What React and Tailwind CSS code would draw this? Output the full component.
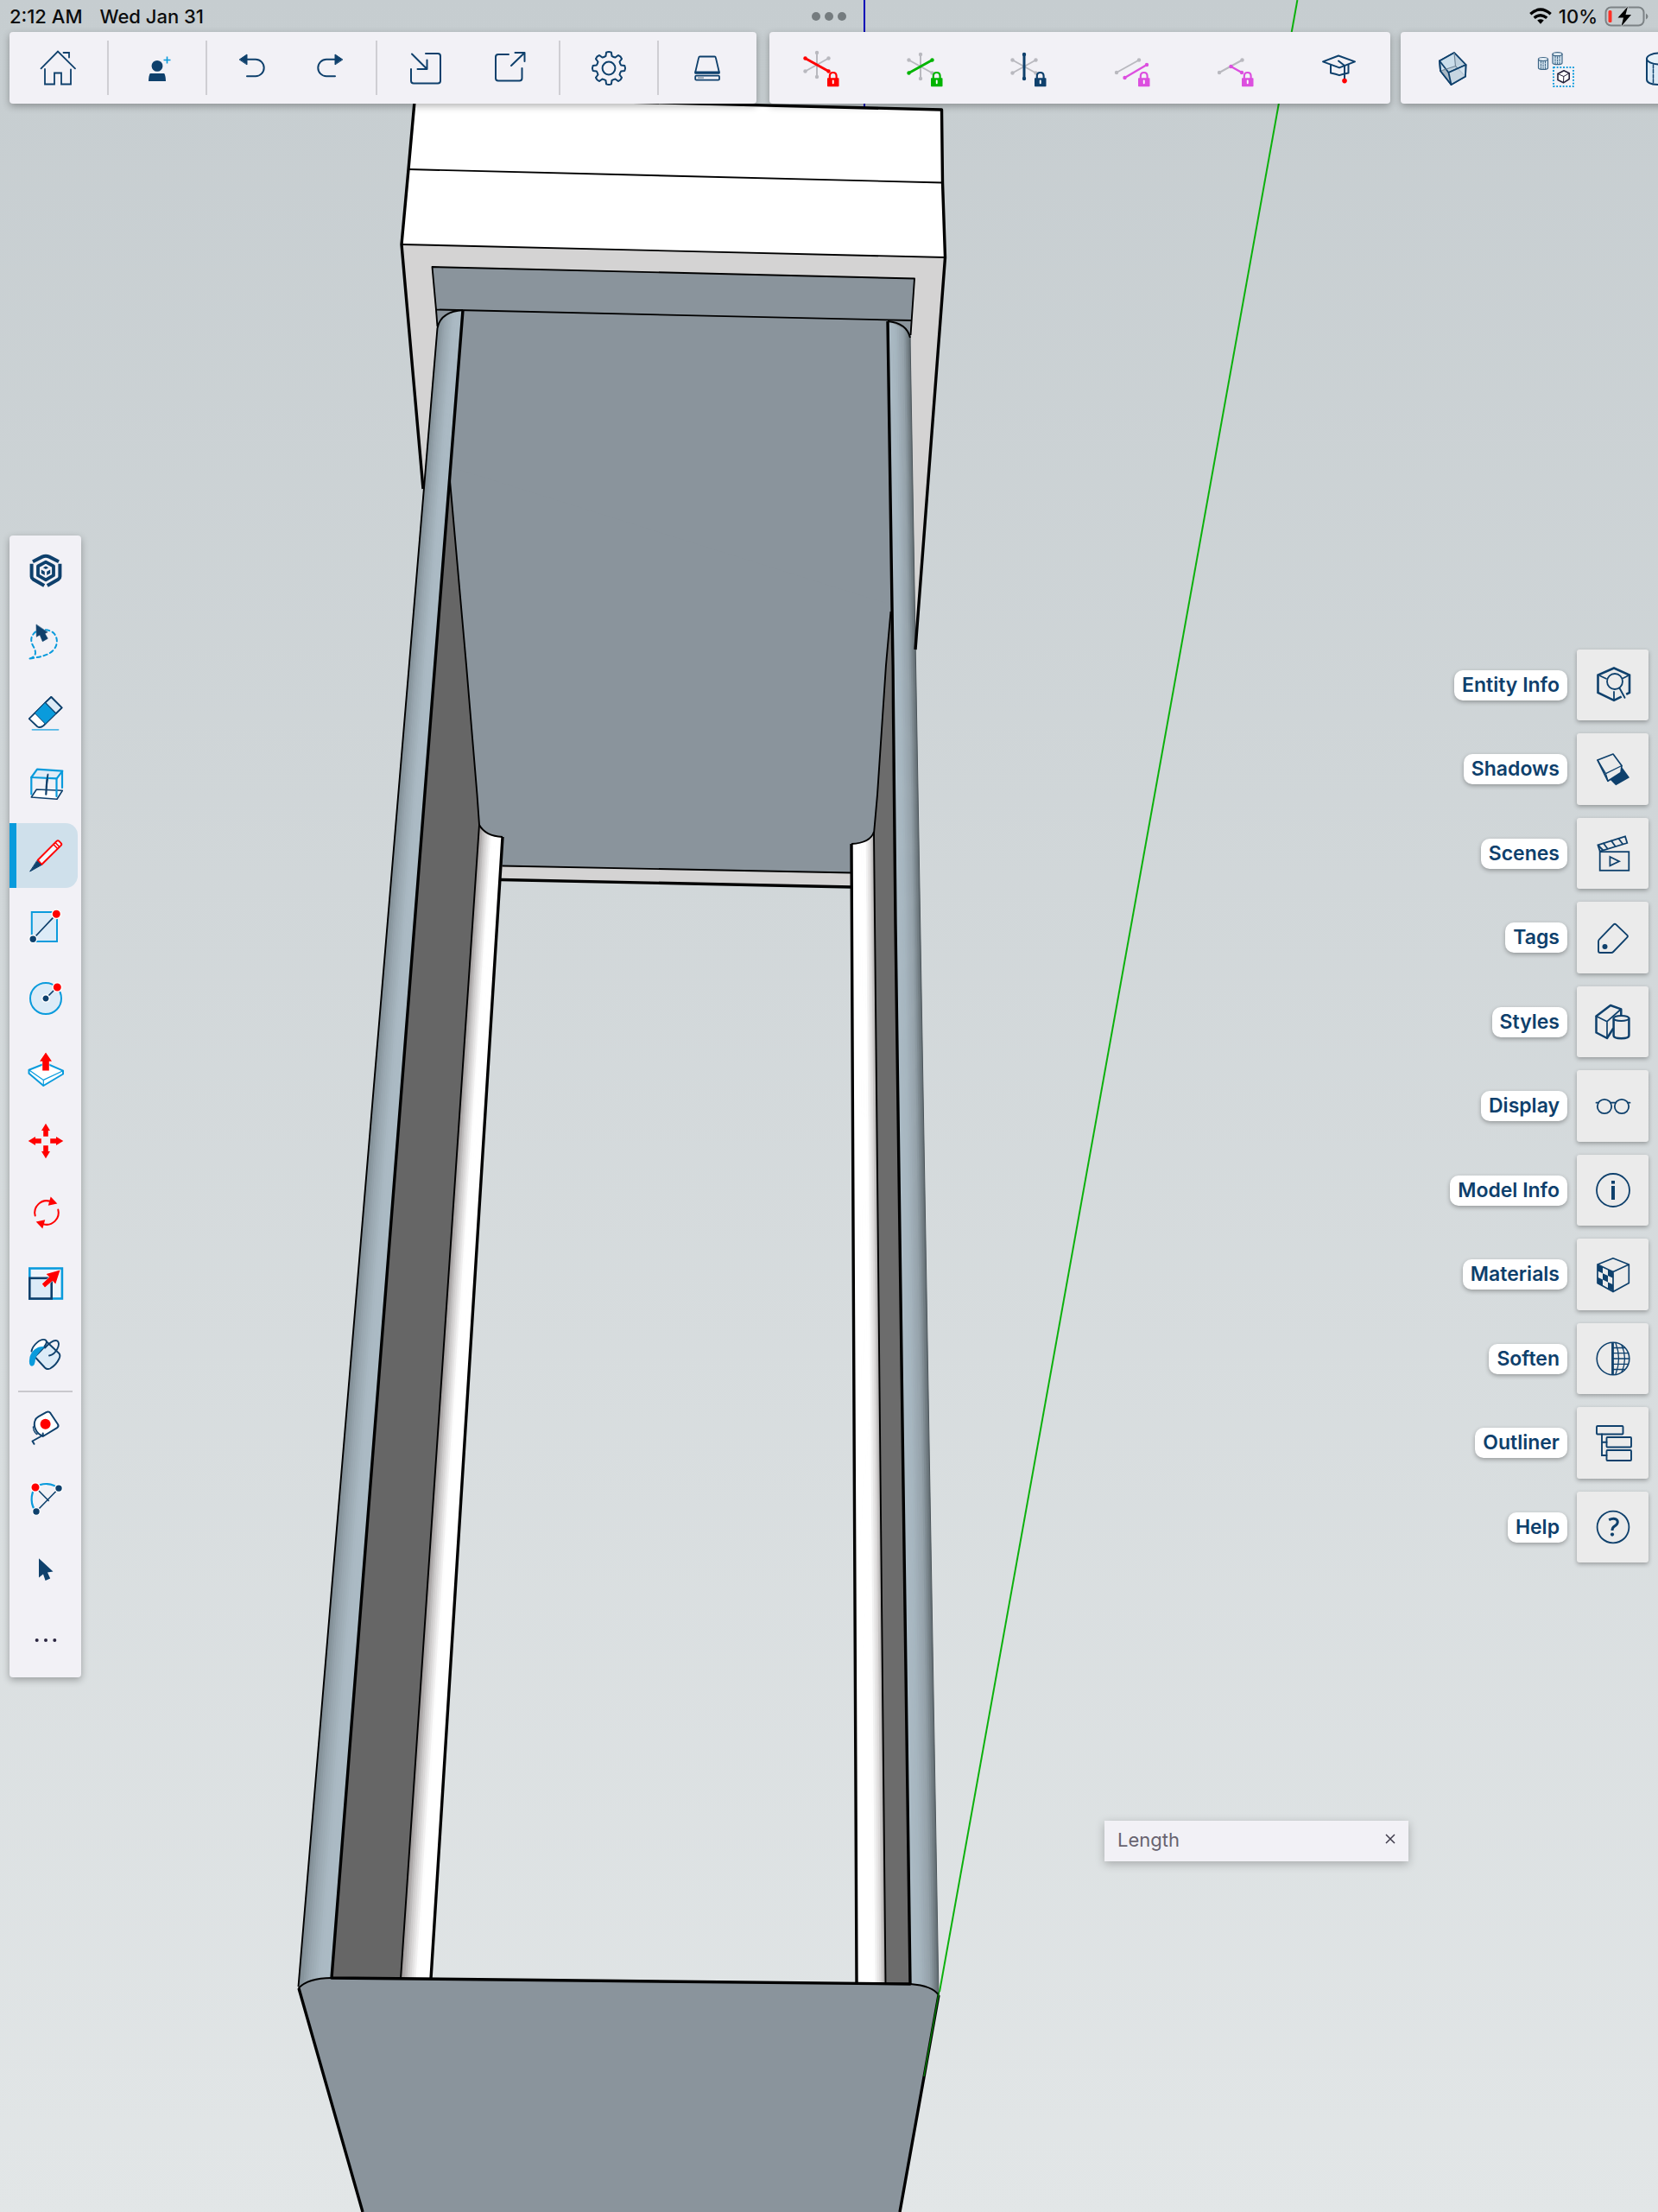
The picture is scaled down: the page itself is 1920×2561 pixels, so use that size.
import React from "react";

const NAVY = "#0e406c";
const SKY = "#0a9bdc";
const RED = "#ff0000";
const PALE = "#dcebf7";

function Icon({ children, sw = 2, fill = "none", stroke = NAVY }) {
  return (
    <svg
      viewBox="-24 -24 48 48"
      className="block h-12 w-12 shrink-0"
      fill={fill}
      stroke={stroke}
      strokeWidth={sw}
      strokeLinejoin="round"
      strokeLinecap="round"
      aria-hidden="true"
    >
      {children}
    </svg>
  );
}

/* ---------- top bar icons ---------- */

const Home = () => (
  <Icon sw={1.8}>
    <path d="M-20.5 .3 -1 -19.5 19 .3M5.5 -18H12V-12.5M-16 1V18.5H-5V5.5H3V18.5H14V1.5" strokeLinejoin="miter" />
  </Icon>
);

const AddPerson = () => (
  <Icon fill={NAVY} stroke="none">
    <circle cx="0" cy="-2.6" r="6.4" />
    <path d="M-8.2 6H8.2Q9.8 8.5 10 15H-10Q-9.8 8.5 -8.2 6Z" />
    <path d="M11.5 -13.5V-5.5M7.5 -9.5H15.5" stroke={SKY} strokeWidth="1.6" strokeLinecap="butt" />
  </Icon>
);

const UndoArrow = () => (
  <Icon>
    <path d="M-7 -10.2H3A9.7 9.7 0 0 1 3 9.2H-7" />
    <path d="M-15.500 -10.2 -7 -16V-4.500Z" fill={NAVY} strokeWidth="1" />
  </Icon>
);

const RedoArrow = () => (
  <Icon>
    <path d="M5 -10.2H-5A9.7 9.7 0 0 0 -5 9.2H5" />
    <path d="M13.500 -10.2 5 -16V-4.500Z" fill={NAVY} strokeWidth="1" />
  </Icon>
);

const ImportIcon = () => (
  <Icon>
    <path d="M0 -17H14Q17 -17 17 -14V14.5Q17 17.500 14 17.500H-14Q-17 17.500 -17 14.500V1" />
    <path d="M-16 -16.5 1 .5M1.5 -9.5V1H-9.5" />
  </Icon>
);

const ExportIcon = () => (
  <Icon>
    <path d="M-2 -16H-14Q-17 -16 -17 -13V11.5Q-17 14.5 -14 14.5H10.5Q13.5 14.5 13.5 11.5V0" />
    <path d="M1 -3 16 -17.5M5.5 -18H16.5V-8" />
  </Icon>
);

const polar = (r, deg) => {
  const a = (deg * Math.PI) / 180;
  return `${(r * Math.cos(a)).toFixed(2)} ${(r * Math.sin(a)).toFixed(2)}`;
};

const gearPath =
  Array.from({ length: 8 }, (_, k) => {
    const t = k * 45;
    return `${k === 0 ? "M" : "L"}${polar(14.6, t - 14)}L${polar(18.6, t - 9)}Q${polar(19.8, t)} ${polar(18.6, t + 9)}L${polar(14.6, t + 14)}Q${polar(14, t + 22.5)} ${polar(14.6, t + 31)}`;
  }).join("") + "Z";

const Gear = () => (
  <Icon>
    <path d={gearPath} />
    <circle r="7.4" />
  </Icon>
);

const Drive = () => (
  <Icon sw={1.8}>
    <path d="M-8.5 -13.5H8.5Q9.6 -13.5 9.8 -12.5L13.8 4.5H-13.8L-9.8 -12.5Q-9.6 -13.5 -8.5 -13.5Z" />
    <path d="M-13.8 4.5V5.8H13.8V4.5" />
    <rect x="-13.8" y="8.6" width="27.8" height="5" rx="1.2" />
    <rect x="-11" y="10.2" width="7" height="1.8" fill="#9aa7b5" stroke="none" />
  </Icon>
);

const Lock = ({ color }) => (
  <g stroke="none">
    <rect x="7" y="11.2" width="13.5" height="10" rx=".8" fill={color} />
    <path d="M9.8 12V9.2Q9.8 5 13.7 5T17.6 9.200V12" fill="none" stroke={color} strokeWidth="2.200" />
    <rect x="12.8" y="13.6" width="1.9" height="4.6" rx=".9" fill="#fff" />
  </g>
);

const Rod = ({ x1, y1, x2, y2, color, w = 2 }) => (
  <g stroke={color} fill={color}>
    <line x1={x1} y1={y1} x2={x2} y2={y2} strokeWidth={w} />
    <circle cx={x1} cy={y1} r="2.2" stroke="none" />
    <circle cx={x2} cy={y2} r="2.2" stroke="none" />
  </g>
);

const GREY = "#b9b9bf";

function Axis({ axis, color }) {
  const dy = axis === "red" ? -4 : -2;
  const rods = {
    red: [-18.5, dy - 7.5, 8.5, dy + 7.5],
    green: [-18.5, dy + 7.5, 8.5, dy - 7.5],
    blue: [-5, dy - 14, -5, dy + 14],
  };
  const order = ["blue", "green", "red"].filter((k) => k !== axis);
  return (
    <Icon>
      {order.map((k) => (
        <Rod key={k} x1={rods[k][0]} y1={rods[k][1]} x2={rods[k][2]} y2={rods[k][3]} color={GREY} />
      ))}
      <Rod x1={rods[axis][0]} y1={rods[axis][1]} x2={rods[axis][2]} y2={rods[axis][3]} color={color} w={3} />
      <Lock color={color} />
    </Icon>
  );
}

const PINK = "#dc4fdf";

const Parallel = () => (
  <Icon>
    <Rod x1={-18} y1={5} x2={8} y2={-9.5} color={GREY} />
    <Rod x1={-8.5} y1={11} x2={17} y2={-4} color={PINK} w={2.4} />
    <Lock color={PINK} />
  </Icon>
);

const Perpendicular = () => (
  <Icon>
    <Rod x1={-19} y1={5} x2={7.5} y2={-9.5} color={GREY} />
    <Rod x1={-5.5} y1={-2} x2={7} y2={5} color={PINK} w={2.4} />
    <Lock color={PINK} />
  </Icon>
);

const Cap = () => (
  <Icon>
    <path d="M-10 -4V5.5Q-4 6.5 0 8.2Q4 6.5 10.5 5.5V-4" />
    <path d="M-19 -7.6 -1 -14.5 18 -7.6 0 -.6Z" fill="#f2f1f6" />
    <path d="M-1 -8.5 6 -3V12" />
    <circle cx="6" cy="14.6" r="2.8" fill={RED} stroke="none" />
  </Icon>
);

const GlassBox = () => (
  <Icon sw={1.8}>
    <path d="M2 -18-15 -8.5-14 3-1.5 19 15 9.5 15.5 -4Z" fill="#d3e3ef" />
    <path d="M2 -18 3.5 -2.5 15.5 -4ZM-14 3 3.5 -2.5 15 9.5-1.5 19Z" fill="#aab8c4" stroke="none" />
    <path d="M-15 -8.5 2 -18 15.5 -4-4.5 5Z" fill="#c7dbea" fillOpacity=".7" />
    <path d="M2 -18 3.5 -2.5M3.5 -2.5-13.5 3M3.5 -2.5 15 9.5" stroke="#6f8496" strokeWidth="1.2" />
    <path d="M-4.5 5-1.5 19 15 9.5 15.5 -4Z" fill="#d3e3ef" fillOpacity=".7" />
    <path d="M-15 -8.5-14 3-1.5 19" />
  </Icon>
);

const MiniCyl = ({ x, y }) => (
  <g transform={`translate(${x} ${y})`} stroke="#3f6686" strokeWidth="1.2">
    <path d="M-5.5 -5V5Q-5.5 7 0 7T5.5 5V-5" fill="#d3e3ef" />
    <ellipse cy="-5" rx="5.5" ry="2" fill="#e8f1f8" />
    <path d="M-2.5 -2.5V6M0 -2V6.5M2.5 -2.5V6" strokeDasharray="2 1.4" strokeWidth="1" />
  </g>
);

const Components = () => (
  <Icon>
    <MiniCyl x={-15} y={-5.5} />
    <MiniCyl x={1.5} y={-11.3} />
    <rect x="-3" y="-1" width="23" height="22" stroke={SKY} strokeWidth="2" strokeDasharray="1.8 1.9" strokeLinecap="butt" />
    <g stroke="#26233a" strokeWidth="1.6">
      <path d="M9 2.8 15.2 5.8V12.5L8.5 16.8 2 13.5V6.5Z" fill="#fff" />
      <path d="M2 6.5 8.8 9.5 15.2 5.8M8.8 9.5 8.5 16.8" strokeWidth="1" />
    </g>
  </Icon>
);

const Cylinder = () => (
  <Icon>
    <path d="M-15 -11V13Q-15 19 0 19T15 13V-11" fill={PALE} />
    <ellipse cy="-11" rx="15" ry="6.5" fill="#e6f1f9" />
    <path d="M-7.5 -4V17" strokeDasharray="4 1.6" strokeWidth="1.5" />
  </Icon>
);

/* ---------- left tool icons ---------- */

const Logo = () => (
  <Icon sw={4}>
    <g strokeLinecap="butt">
      <path d="M-15 -10.8-4 -16.4Q0 -18.3 4 -16.4L15 -10.8" />
      <path d="M-16.4 -8.2V6.5Q-16.4 8.6 -14.5 9.7L-1.8 17M16.4 -8.2V6.5Q16.4 8.6 14.5 9.7L1.8 17" />
      <path d="M0 -10.4 9 -5.5V5.2L0 10.4-9 5.2V-5.5Z" strokeWidth="3.8" />
    </g>
    <path d="M0 -5.6 3.2 -3.8 0 -2-3.2 -3.8ZM-5.2 -1.4-1.2 .8V5L-5.2 2.8ZM5.2 -1.4 1.2 .8V5L5.2 2.8Z" fill={NAVY} stroke="none" />
  </Icon>
);

const Lasso = () => (
  <Icon>
    <path d="M-18.5 19.5C-11 17.5 -11 12 -13.5 7C-18.5 -1 -17.5 -6 -12.5 -11C-6 -15 6 -15 10.5 -8.5C14 -3 14 4.5 8 10.5C1 17 -8 17.5 -18.5 19.5" stroke={SKY} strokeDasharray="4.5 3.6" />
    <path d="M-11 -19.7-10.7 -5.7-6.9 -8-3.7 -.3 2.3 -3.7-1 -9.5 1.8 -10.9Z" fill={NAVY} stroke={NAVY} strokeWidth=".6" />
  </Icon>
);

const Eraser = () => (
  <Icon sw={1.8}>
    <path d="M6.3 -19 18.6 -6.7-2.5 14Q-6.5 17.5 -10 15L-19.3 6.2Z" fill="#fff" />
    <path d="M6.3 -19 18.6 -6.7 11.7 .2-.7 -12.4Z" fill={PALE} />
    <path d="M-.7 -12.4 11.7 .2-.5 12.2-12.7 -.3Z" fill={SKY} strokeWidth="1" />
    <path d="M-15.5 18.8H14.5" stroke="#53b7e6" />
  </Icon>
);

const SectionBox = () => (
  <Icon sw={1.6}>
    <path d="M-16.7 15-10.7 6 19.3 7.3 13 17.3Z" fill="#fff" />
    <path d="M2.7 -12Q.5 0 .3 11.7" strokeWidth="2.2" />
    <g stroke={SKY} strokeWidth="2.2">
      <path d="M-16.7 -8-10 -17.3 19.3 -15.3 12.7 -6.7Z" fill={PALE} fillOpacity=".8" />
      <path d="M-16.7 -8V11.5M12.5 -6.7V14M19 -15V4" />
    </g>
    <path d="M2.4 -11Q1 -5 .8 3" strokeWidth="1.8" />
  </Icon>
);

const Pencil = () => (
  <Icon stroke={RED} sw={2}>
    <path d="M-9.2 4.8 12.6 -17.1Q14 -18.5 15.4 -17.1L17.6 -14.9Q19 -13.5 17.6 -12.1L-4.8 10Z" fill="#f4f6fb" />
    <path d="M8.8 -13.5 13.6 -8.4M11 -15.5 15.8 -10.5" strokeWidth="1.5" />
    <path d="M-10 5.8-5.2 10.6-18 17.8Z" fill={NAVY} stroke={NAVY} strokeWidth="1" />
  </Icon>
);

const Dot = ({ x, y, r = 4.6, color = RED }) => (
  <circle cx={x} cy={y} r={r + 0.6} fill={color} stroke="#fff" strokeWidth="1.4" />
);

const RectTool = () => (
  <Icon>
    <rect x="-16.2" y="-17" width="29.2" height="34" fill={PALE} stroke={SKY} strokeLinejoin="miter" />
    <path d="M-14.7 14 12.3 -14.7" strokeWidth="1.7" />
    <Dot x={12.3} y={-14.7} />
    <Dot x={-14.8} y={14.2} r={3.8} color={NAVY} />
  </Icon>
);

const CircleTool = () => (
  <Icon>
    <circle r="18" fill={PALE} stroke={SKY} />
    <path d="M0 0 13 -13" strokeWidth="1.7" />
    <Dot x={13.3} y={-13} />
    <Dot x={0} y={0} r={3.6} color={NAVY} />
  </Icon>
);

const PushPull = () => (
  <Icon stroke={SKY}>
    <path d="M-19.5 .7 0 -7 20 1.7V5.5L-2.7 19-19.5 4.7Z" fill="#fff" />
    <path d="M-19.5 .7-2.7 12.4 20 1.7M-2.7 12.4V19" strokeWidth="1.2" />
    <path d="M0 -19.5 7 -9.2H3.8V1.5H-3.8V-9.2H-7Z" fill={RED} stroke="#fff" strokeWidth="1" paintOrder="stroke" />
  </Icon>
);

const Move = () => (
  <Icon fill={RED} stroke="none">
    {[0, 90, 180, 270].map((a) => (
      <path key={a} transform={`rotate(${a})`} d="M0 -20.3 5 -12H2.8V-5.2H-2.8V-12H-5Z" />
    ))}
  </Icon>
);

const Rotate = () => (
  <Icon stroke={RED}>
    {[0, 180].map((a) => (
      <g key={a} transform={`translate(1 1) rotate(${a})`}>
        <path d="M-13.3 3.5A13.8 13.8 0 0 1 4 -13.2" />
        <path d="M12.3 -10.6 4.7 -18.5 1.8 -8.2Z" fill={RED} stroke="none" />
      </g>
    ))}
  </Icon>
);

const Scale = () => (
  <Icon sw={2.6}>
    <g strokeLinejoin="miter">
      <rect x="-18.7" y="-17.5" width="37.6" height="35" fill="#eef5fb" stroke={SKY} />
      <rect x="-18.7" y="-6.2" width="25.4" height="23.7" fill={PALE} />
    </g>
    <path d="M16.5 -15.4 11.3 .4 7.8 -3.2-1 4.4-4.2 .4 4.4 -7.6.6 -11Z" fill={RED} stroke="#fff" strokeWidth="1" paintOrder="stroke" />
  </Icon>
);

const Paint = () => (
  <Icon sw={1.9}>
    <path d="M0 -15.5 15 -1.5Q17.5 1 15.5 5Q12 12.5 5 16.5Q1.5 18 -1 15.5L-12.5 3Z" fill={PALE} />
    <path d="M-16.5 -3.5C-15 -11 -6 -18.5 -1 -16.8C3 -15 1 -10 -12 2" fill="#fff" />
    <path d="M-1.5 -8.8C-9 -10 -16 -5 -18.5 3Q-20.5 13.5 -16 13.7Q-12.5 13.5 -12 5.5Q-11.5 1 -1.5 -8.8Z" fill={SKY} stroke="none" />
    <path d="M-1 -7.5C4 -13 10 -17.5 13.5 -15.5C17.5 -12 12 .5 4 1.5" />
  </Icon>
);

const Tape = () => (
  <Icon>
    <path d="M-3.3 9.5C-12 7 -14.5 -3 -12.5 -8Q-11.5 -11 -8.5 -12.8L.5 -17.8Q3.5 -19.5 5.5 -16.8L14 -4Q15.5 -1.5 13 .2L-3.3 10V6.5" fill="#fff" />
    <path d="M-3.8 9-15.5 15.5-13.5 18.8" />
    <path d="M-14.5 -1Q-14 6 -9 8" strokeDasharray="1.5 1.3" strokeWidth="1.5" />
    <circle cx="-.4" cy="-4.3" r="6" fill={RED} stroke="none" />
  </Icon>
);

const ArcTool = () => (
  <Icon sw={1.6}>
    <path d="M-12 -13C-4 -19 8 -18 15 -11.7M-12 -13C-18 -5 -18 8 -11 15" stroke={SKY} strokeWidth="2.2" />
    <path d="M-11 15 15 -11.7M-12 -13 3.3 2.5" />
    <Dot x={-12} y={-13} />
    <Dot x={15} y={-11.9} r={3.8} color={NAVY} />
    <Dot x={-11} y={15} r={3.8} color={NAVY} />
  </Icon>
);

const Select = () => (
  <Icon fill={NAVY} stroke="none">
    <path d="M-8 -12.8V9.6L-3 5.6-.4 13 5.2 10.6 2 3.6 8.5 2.6Z" />
  </Icon>
);

const More = () => (
  <Icon fill="#2b2640" stroke="none">
    <circle cx="-10.3" r="2" />
    <circle r="2" />
    <circle cx="10.3" r="2" />
  </Icon>
);

/* ---------- right panel icons ---------- */

const EntityInfo = () => (
  <Icon sw={2.6}>
    <path d="M1 -19.5 19 -11.5V9L1 17.8-17.5 9V-11.5Z" strokeLinejoin="miter" />
    <path d="M-15 -10.5-8 -7.2M17 -10.5 11 -7.5M1 8V17" strokeWidth="1.8" />
    <path d="M8 4 14 15" stroke="#ebebeb" strokeWidth="6" strokeLinecap="butt" />
    <circle cx="2" cy="-4" r="9" fill="#ebebeb" strokeWidth="1.8" />
    <path d="M7.5 3.8 13.5 14.8" strokeWidth="1.9" />
  </Icon>
);

const Shadows = () => (
  <Icon sw={1.7}>
    <path d="M10.5 -2.5 19 9.3 3.2 18.2-3.5 11.5 8.5 4Z" fill={NAVY} stroke="none" />
    <path d="M-18 -11 0 -18 10 -4.5 9 3.5-6 13.3Z" fill="#ebebeb" />
    <path d="M-18 -11-8.5 4.6 10 -4.5M-8.5 4.6-6 13.3" strokeWidth="1.3" />
  </Icon>
);

const Scenes = () => (
  <Icon sw={1.8}>
    <g strokeLinejoin="miter">
      <path d="M-17.6 -9.7 14 -19.6 16.3 -12-15.2 -2.4Z" />
      <path d="M-11 -11.5-6.5 -5.5M-2 -14.5 2.5 -8.3M6.5 -17 11 -11M-17 -9-12 -4" />
      <rect x="-15.3" y="-1.8" width="33.6" height="21.6" />
      <path d="M-3.6 4 7 9.2-3.6 14.4Z" />
    </g>
  </Icon>
);

const Tags = () => (
  <Icon sw={1.9}>
    <path d="M.6 -15.6Q2 -17 3.4 -15.6L16.2 -3.4Q17.6 -2 16.2 -.6L.2 16Q-.8 17 -2 17H-15Q-17 17 -17 15V4Q-17 2.6 -16 1.6Z" />
    <circle cx="-9.5" cy="10" r="3" fill={NAVY} stroke="none" />
  </Icon>
);

const Styles = () => (
  <Icon sw={2.5}>
    <path d="M-19.5 -6.5-3 -19 9.3 -14.6V-8M-19.5 -6.5V12.5L-7 19 0 8" />
    <path d="M-19.5 -6.5-7 -.3V18M-7 -.3 9 -14.5" strokeWidth="1.7" />
    <path d="M.6 -4V16Q.6 19.2 9.5 19.2T18.4 16V-4" fill="#ebebeb" />
    <ellipse cx="9.5" cy="-4" rx="8.9" ry="3" fill="#ebebeb" strokeWidth="1.8" />
  </Icon>
);

const Display = () => (
  <Icon sw={1.8}>
    <circle cx="-10" cy="0" r="8.2" />
    <circle cx="10" cy="0" r="8.2" />
    <path d="M-19.5 -4.3H-17M19.5 -4.3H17M-3 -4.3H3" />
  </Icon>
);

const ModelInfo = () => (
  <Icon sw={1.8}>
    <circle r="19" />
    <path d="M0 -5V11" strokeWidth="4" strokeLinecap="butt" />
    <rect x="-2" y="-11" width="4" height="3.6" fill={NAVY} stroke="none" />
  </Icon>
);

const cell = (i, j) => {
  const x = -18 + i * 6;
  const y = -12 + i * 2.8 + j * 7.4;
  return `M${x} ${y}l6 2.8v7.4l-6 -2.8Z`;
};

const Materials = () => (
  <Icon sw={1.7}>
    <path
      fill={NAVY}
      stroke="none"
      d={[cell(0, 0), cell(2, 0), cell(1, 1), cell(0, 2), cell(2, 2)].join("")}
    />
    <path d="M0 -19.3 18.3 -12V9.6L0 19.6-18 9.6V-12ZM-18 -12 0 -3.6 18.3 -12M0 -3.6V19.6" />
  </Icon>
);

const Soften = () => (
  <Icon sw={1.6}>
    <circle r="18.8" />
    <path d="M-.5 -18.5V18.5" strokeWidth="2.8" strokeLinecap="butt" />
    <path d="M3 -18Q10 0 3 18M10 -15.5Q17 0 10 15.5M0 -12.5H13.5M0 -6.3H17.5M0 0H18.5M0 6.3H17.5M0 12.5H13.5" strokeWidth="1.3" />
  </Icon>
);

const Outliner = () => (
  <Icon sw={1.9}>
    <rect x="-19" y="-20" width="30.5" height="9.5" rx="1" />
    <rect x="-7.5" y="-7" width="28.5" height="11.5" rx="1" />
    <rect x="-7.5" y="8" width="28.5" height="12" rx="1" />
    <path d="M-13 -10.5V14H-7.5M-13 -1.3H-7.5" strokeLinejoin="miter" />
  </Icon>
);

const Help = () => (
  <Icon sw={1.8}>
    <circle r="18.4" />
    <path d="M-4.8 -8.3Q0 -10.6 3.2 -9.2Q6.4 -7.2 4.6 -3.6Q3.5 -2 1.2 -.6Q-1 .8 -1 4" strokeWidth="3" strokeLinecap="butt" />
    <circle cx="-1" cy="8.6" r="2.1" fill={NAVY} stroke="none" />
  </Icon>
);

/* ---------- 3D model ---------- */

const mix = (a, b, t) => a + (b - a) * t;

function colorAt(stops, t) {
  let i = 0;
  while (i < stops.length - 2 && t > stops[i + 1][0]) i++;
  const [t0, a] = stops[i];
  const [t1, b] = stops[i + 1];
  const k = (t - t0) / (t1 - t0);
  return `rgb(${a.map((v, n) => Math.round(mix(v, b[n], k))).join(",")})`;
}

/* Shades a tapering tube with thin facets running along its length. */
function Tube({ left, right, stops, n = 14 }) {
  return Array.from({ length: n }, (_, i) => {
    const a = i / n;
    const b = Math.min(1, (i + 1.3) / n);
    const at = (end, t) => `${mix(left[end][0], right[end][0], t)},${mix(left[end][1], right[end][1], t)}`;
    return (
      <polygon
        key={i}
        points={`${at(0, a)} ${at(0, b)} ${at(1, b)} ${at(1, a)}`}
        fill={colorAt(stops, (i + 0.5) / n)}
      />
    );
  });
}

const SLATE = "#8a949c";

function Model() {
  return (
    <svg
      viewBox="0 0 1920 2561"
      preserveAspectRatio="xMidYMid slice"
      className="absolute inset-0 h-full w-full"
      role="img"
      aria-label="3D model viewport"
      stroke="none"
    >
      <path d="M1001 0V126" stroke="#0000b8" strokeWidth="2" />
      <path d="M1502.4 0 1088 2306" stroke="#0cb00c" strokeWidth="2" />

      <path d="M481 112 1090 127 1091.5 211 1094.5 298 465 283 473 196Z" fill="#fff" />
      <path d="M465 283 1094.5 298 1060 752 1054 388 1059 322.5 500.5 309 506 376 490 566Z" fill="#d4d3d3" />
      <path d="M500.5 309 1059 322.5 1054 400 1034 740H521L506 376Z" fill={SLATE} />
      <path d="M520 540 1032 700 1026 770 1016 920 1012 965 986 977V1011L581 1003V969L555 955 552.5 920Z" fill={SLATE} />
      <path d="M581 1002.5 986 1010.5V1027L580 1018.5Z" fill="#d4d3d3" />

      <path d="M521 556 540 770 552.5 920 555 955 464 2291H384Z" fill="#666" />
      <path d="M1031.5 708 1026 770 1016 920 1012 965 1025.5 2297H1054Z" fill="#6c6c6c" />

      <Tube
        left={[[507.5, 362], [345.5, 2302]]}
        right={[[536, 359], [384, 2290]]}
        stops={[[0, [126, 138, 145]], [0.3, [152, 166, 175]], [0.65, [170, 185, 195]], [1, [172, 188, 198]]]}
      />
      <Tube
        left={[[1028, 371], [1054, 2297]]}
        right={[[1054, 385], [1087, 2310]]}
        stops={[[0, [172, 188, 198]], [0.35, [166, 181, 191]], [0.7, [148, 161, 169]], [1, [96, 106, 112]]]}
      />
      <path d="M504 355H537V359Q509 361 506.5 380Z" fill={SLATE} />
      <path d="M1027 369H1055L1054 391Q1050 374 1027 372Z" fill={SLATE} />

      <Tube
        left={[[555, 953], [464, 2291]]}
        right={[[582, 969], [499, 2291]]}
        stops={[[0, [150, 146, 146]], [0.25, [205, 203, 203]], [0.55, [255, 255, 255]], [1, [255, 255, 255]]]}
      />
      <Tube
        left={[[986, 977], [992, 2296]]}
        right={[[1012, 963], [1025.5, 2297]]}
        stops={[[0, [255, 255, 255]], [0.6, [255, 255, 255]], [0.85, [215, 213, 213]], [1, [160, 158, 158]]]}
      />
      <path d="M555 952 583 968Q562 969 555 954Z" fill={SLATE} />
      <path d="M985 976 1012 962Q1008 977 985 977Z" fill={SLATE} />

      <path d="M345.5 2302Q357 2290 384 2290L1054 2297Q1080 2299 1087 2310L1042 2561H420Z" fill={SLATE} />

      <g fill="none" stroke="#000" strokeWidth="1.9" strokeLinejoin="round">
        <path d="M473 196 1091.5 211.5M465 283 1094.5 298" />
        <path d="M505 358.5 500.5 309 1059 322.5 1054.5 388M505 358.5 1055 371M505 358.5 506.5 378" />
        <path d="M536 359Q510 361 506.5 380L345.5 2300" />
        <path d="M1028 372Q1050 374 1054 391" />
        <path d="M1054 391 1087 2310" stroke="#4d565b" strokeWidth="1" />
        <path d="M521 556 540 770 552.5 920 555 955 464 2291" />
        <path d="M555 955Q562 968 582 969M986 977Q1008 976 1012 963" />
        <path d="M1031.5 708 1026 770 1016 920 1012 965 1025.5 2297" />
        <path d="M581.5 1002.5 986 1010.5" />
        <path d="M345.5 2302Q357 2290 384 2290M1054 2297Q1080 2299 1087 2310" />
      </g>
      <g fill="none" stroke="#000" strokeWidth="3.4" strokeLinejoin="round">
        <path d="M490 566 465 283 473 196 480.5 112 1090.5 127 1091.5 211 1094.5 298 1060 752" />
        <path d="M536 359 384 2290 1054 2297 1037 1070 1034 770 1028 372" />
        <path d="M582 969 499 2291M986 977 992 2296" />
        <path d="M580 1018.5 986 1027" />
        <path d="M346 2302 420 2561M1087 2310 1042 2561" />
      </g>
      <path d="M1087.5 2306 1070 2404" stroke="#067806" strokeWidth="1.5" />
    </svg>
  );
}

/* ---------- chrome ---------- */

const panel = "rounded-[4px] bg-[#f2f1f6] shadow-[0_3px_8px_rgba(0,0,0,0.3)]";

function Group({ className, items }) {
  return (
    <div className={`flex items-center justify-center ${className}`}>
      {items.map(([label, I, w]) => (
        <button key={label} type="button" aria-label={label} className={`flex h-[83px] items-center justify-center ${w}`}>
          <I />
        </button>
      ))}
    </div>
  );
}

const Rule = () => <div className="-mx-px h-[63px] w-[2px] shrink-0 bg-[#cfced3]" />;

const RedAxis = () => <Axis axis="red" color={RED} />;
const GreenAxis = () => <Axis axis="green" color="#00b400" />;
const BlueAxis = () => <Axis axis="blue" color={NAVY} />;

const tools = [
  ["SketchUp", Logo],
  ["Lasso select", Lasso],
  ["Eraser", Eraser],
  ["Section", SectionBox],
  ["Line", Pencil],
  ["Rectangle", RectTool],
  ["Circle", CircleTool],
  ["Push/Pull", PushPull],
  ["Move", Move],
  ["Rotate", Rotate],
  ["Scale", Scale],
  ["Paint", Paint],
];

const moreTools = [
  ["Tape measure", Tape],
  ["Arc", ArcTool],
  ["Select", Select],
  ["More tools", More],
];

const panels = [
  ["Entity Info", EntityInfo],
  ["Shadows", Shadows],
  ["Scenes", Scenes],
  ["Tags", Tags],
  ["Styles", Styles],
  ["Display", Display],
  ["Model Info", ModelInfo],
  ["Materials", Materials],
  ["Soften", Soften],
  ["Outliner", Outliner],
  ["Help", Help],
];

function StatusBar() {
  return (
    <div className="grid h-[37px] grid-cols-3 items-center px-[11px] text-[22px] leading-6 font-medium text-[#0b0c0d]">
      <div className="flex gap-5">
        <span>2:12 AM</span>
        <span>Wed Jan 31</span>
      </div>
      <div className="flex justify-center gap-[5px]">
        <span className="h-[10px] w-[10px] rounded-full bg-[#757c7f]" />
        <span className="h-[10px] w-[10px] rounded-full bg-[#757c7f]" />
        <span className="h-[10px] w-[10px] rounded-full bg-[#757c7f]" />
      </div>
      <div className="flex items-center justify-end gap-2">
        <svg viewBox="0 0 26 19" className="h-[19px] w-[26px]" fill="none" stroke="#000" strokeWidth="3.4" aria-hidden="true">
          <path d="M1.3 7.2Q13 -3 24.7 7.2M5.7 11.7Q13 5.6 20.3 11.7" />
          <path d="M13 18.7 9.2 14.6Q13 11.7 16.8 14.6Z" fill="#000" stroke="none" />
        </svg>
        <span>10%</span>
        <svg viewBox="0 0 51 26" className="h-[26px] w-[51px]" aria-hidden="true">
          <rect x="1.5" y="2.5" width="44" height="21" rx="6" fill="none" stroke="#7c8285" strokeWidth="2" />
          <path d="M48 9.5Q50.5 11 50.5 13T48 16.5Z" fill="#7c8285" />
          <rect x="4.5" y="6" width="4" height="14" rx="1.5" fill="#ff3126" />
          <path d="M27 1.5 15.5 14.5H22L19.5 24.5 31 11H24.5Z" fill="#000" stroke="#c8ced1" strokeWidth="1.6" paintOrder="stroke" />
        </svg>
      </div>
    </div>
  );
}

export default function App() {
  return (
    <div className="relative grid min-h-screen overflow-hidden bg-linear-to-b from-[#c6cdd0] to-[#e2e6e7] font-['Inter',sans-serif]">
      <Model />

      <header className="relative z-10 col-start-1 row-start-1 min-w-0 self-start">
        <StatusBar />
        <nav aria-label="Toolbars" className="flex gap-3 pl-[11px]">
          <div className={`mr-[3px] flex shrink-0 items-center ${panel}`}>
            <Group className="w-[114px]" items={[["Home", Home, "w-full"]]} />
            <Rule />
            <Group className="w-[114px]" items={[["Add collaborator", AddPerson, "w-full"]]} />
            <Rule />
            <Group className="w-[197px]" items={[["Undo", UndoArrow, "w-[90px]"], ["Redo", RedoArrow, "w-[90px]"]]} />
            <Rule />
            <Group className="w-[212px]" items={[["Import", ImportIcon, "w-[98px]"], ["Export", ExportIcon, "w-[98px]"]]} />
            <Rule />
            <Group className="w-[114px]" items={[["Settings", Gear, "w-full"]]} />
            <Rule />
            <Group className="w-[114px]" items={[["Storage", Drive, "w-full"]]} />
          </div>
          <Group
            className={`shrink-0 ${panel}`}
            items={[
              ["Lock red axis", RedAxis, "w-[120px]"],
              ["Lock green axis", GreenAxis, "w-[120px]"],
              ["Lock blue axis", BlueAxis, "w-[120px]"],
              ["Lock parallel", Parallel, "w-[120px]"],
              ["Lock perpendicular", Perpendicular, "w-[120px]"],
              ["Learn", Cap, "w-[119px]"],
            ]}
          />
          <Group
            className={`shrink-0 ${panel}`}
            items={[
              ["X-ray", GlassBox, "w-[120px]"],
              ["Components", Components, "w-[120px]"],
              ["Solid tools", Cylinder, "w-[120px]"],
            ]}
          />
        </nav>
      </header>

      <main className="relative col-start-1 row-start-1 flex min-w-0 items-center justify-between px-[11px]">
        <aside aria-label="Tools" className={`w-[83px] pb-[2px] ${panel}`}>
          <div>
            {tools.map(([label, I]) => (
              <button
                key={label}
                type="button"
                aria-label={label}
                aria-pressed={label === "Line"}
                className="flex h-[82px] w-full items-center even:h-[83px]"
              >
                <span
                  className={
                    label === "Line"
                      ? "flex h-[75px] w-[79px] items-center justify-center rounded-r-[14px] border-l-8 border-[#0a9bdc] bg-[#cfe0eb] pr-1"
                      : "flex w-full justify-center"
                  }
                >
                  <I />
                </span>
              </button>
            ))}
          </div>
          <div className="mx-[10px] h-[2px] bg-[#c9c8cd]" />
          <div>
            {moreTools.map(([label, I]) => (
              <button key={label} type="button" aria-label={label} className="flex h-[82px] w-full items-center justify-center">
                <I />
              </button>
            ))}
          </div>
        </aside>

        <aside aria-label="Panels" className="flex flex-col items-end gap-[15px]">
          {panels.map(([label, I]) => (
            <button key={label} type="button" className="flex h-[82px] items-center gap-[11px] even:h-[83px]">
              <span className="rounded-[10px] bg-white px-[9px] py-[5px] text-[23px] leading-[25px] font-semibold text-[#0e406c] shadow-[0_2px_5px_rgba(0,0,0,0.3)]">
                {label}
              </span>
              <span className="flex h-full w-[83px] items-center justify-center rounded-[3px] bg-[#ebebeb] shadow-[0_2px_5px_rgba(0,0,0,0.3)]">
                <I />
              </span>
            </button>
          ))}
        </aside>
      </main>

      <form className="absolute right-[289px] bottom-[406px] flex h-[47px] w-[352px] items-center bg-[#f2f1f6] px-[15px] shadow-[0_3px_10px_rgba(0,0,0,0.25)]">
        <input
          type="text"
          aria-label="Length"
          placeholder="Length"
          className="min-w-0 flex-1 bg-transparent pb-[4px] text-[22px] leading-7 text-[#5f5b6b] outline-none placeholder:text-[#67636f]"
        />
        <button type="button" aria-label="Close" className="pb-[5px]">
          <svg viewBox="0 0 12 12" className="block h-3 w-3" fill="none" stroke="#3f3c4c" strokeWidth="1.5" aria-hidden="true">
            <path d="M1 1 11 11M11 1 1 11" />
          </svg>
        </button>
      </form>
    </div>
  );
}
